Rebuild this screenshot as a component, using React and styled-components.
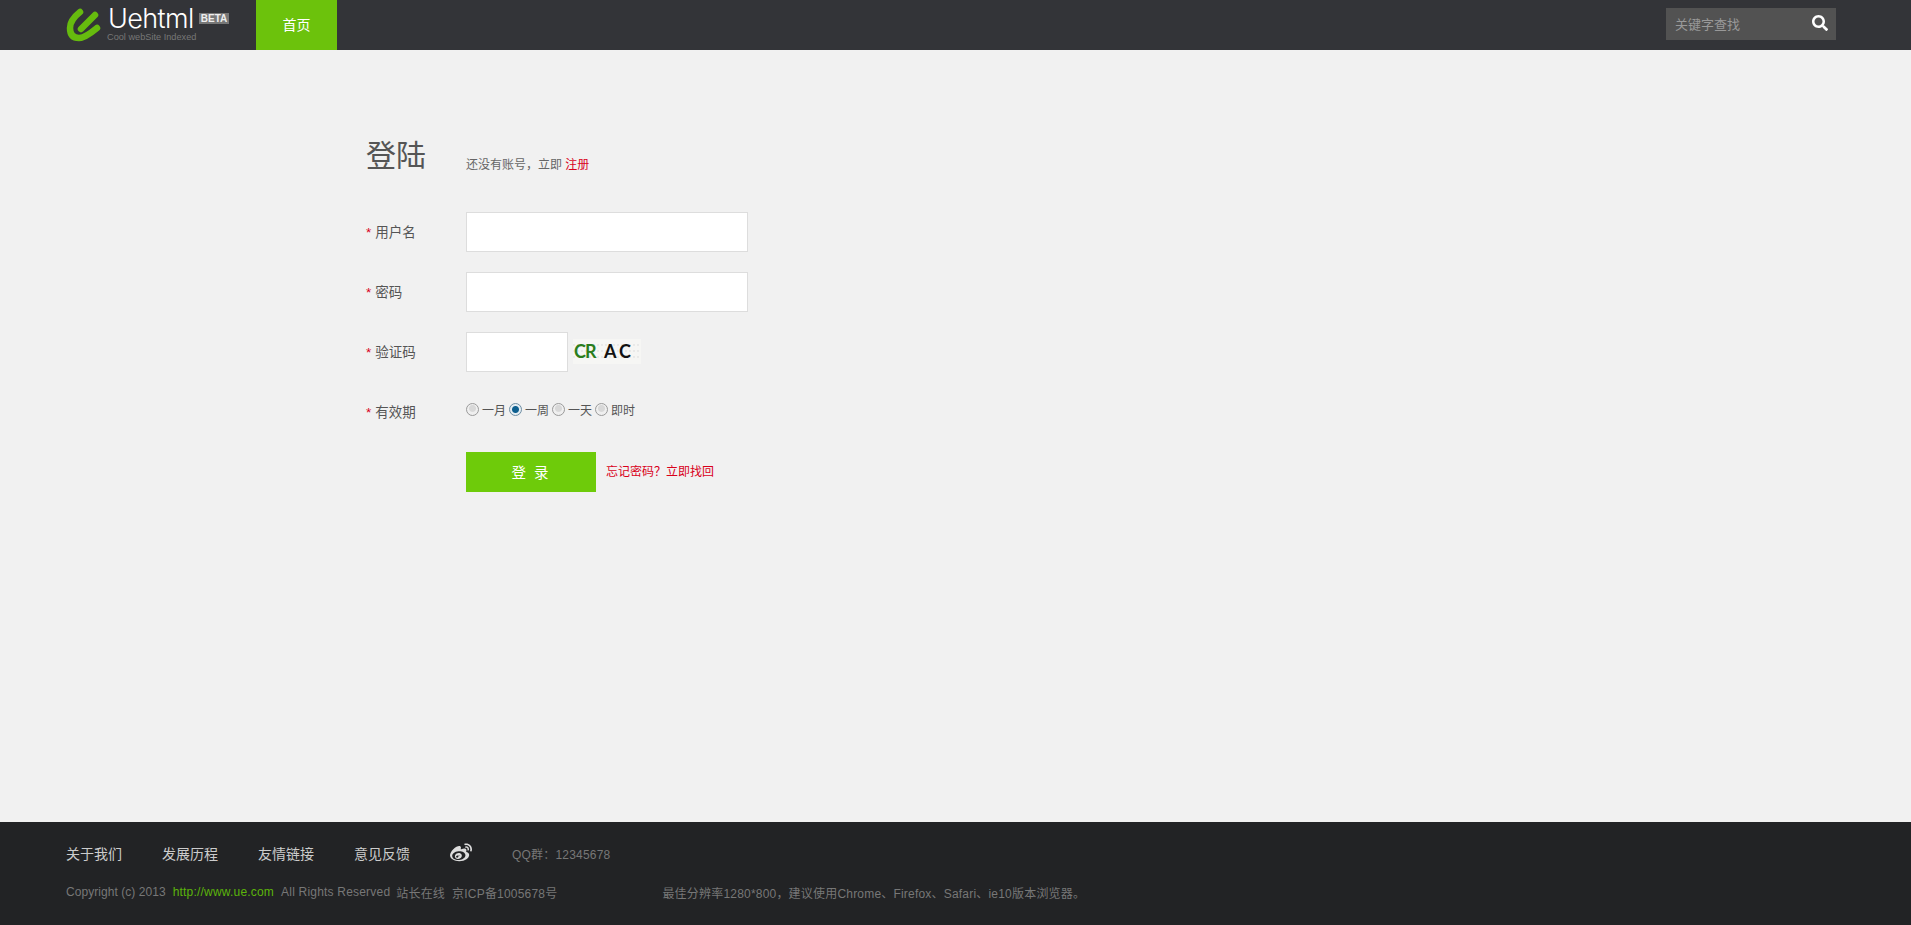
import React from 'react';
import styled, { createGlobalStyle } from 'styled-components';
import { FaSearch, FaWeibo } from 'react-icons/fa';

const FONT = '"Liberation Sans", "Noto Sans CJK SC", sans-serif';

const Global = createGlobalStyle`
  html, body { margin: 0; padding: 0; background: #f1f1f1; }
  body { font-family: ${FONT}; font-size: 12px; color: #555; }
  * { box-sizing: border-box; }
`;

const Page = styled.div`
  display: flex;
  flex-direction: column;
  height: 925px;
  overflow: hidden;
`;

const Header = styled.header`
  display: flex;
  align-items: stretch;
  height: 50px;
  padding: 0 75px 0 66px;
  background: #333438;
  flex: none;
`;
const Logo = styled.a`
  display: flex;
  width: 190px;
  flex: none;
`;
const LogoMark = styled.svg`
  width: 36px;
  height: 36px;
  margin-top: 7px;
  flex: none;
`;
const LogoWords = styled.div`
  display: flex;
  flex-direction: column;
  margin-left: 6px;
`;
const LogoRow = styled.div`
  display: flex;
  align-items: flex-start;
`;
const LogoName = styled.span`
  font-family: "Inter", sans-serif;
  font-weight: 300;
  font-size: 27px;
  line-height: 32px;
  margin-top: 3px;
  letter-spacing: -0.6px;
  color: #fff;
`;
const Beta = styled.span`
  margin: 13px 0 0 5px;
  padding: 0 2px;
  height: 11px;
  line-height: 11px;
  background: #777;
  color: #eee;
  font-size: 10px;
  font-weight: bold;
`;
const Slogan = styled.span`
  font-size: 9.2px;
  line-height: 9px;
  margin: -2px 0 0 -1px;
  color: #777;
  white-space: nowrap;
`;
const NavItem = styled.a`
  display: flex;
  align-items: center;
  justify-content: center;
  width: 81px;
  padding-bottom: 2px;
  background: #6cc20c;
  color: #fff;
  font-size: 14px;
`;
const Search = styled.div`
  display: flex;
  align-items: center;
  justify-content: space-between;
  width: 170px;
  height: 32px;
  margin: 8px 0 0 auto;
  padding: 0 8px 2px 9px;
  background: #525252;
  color: #999;
  font-size: 13px;
  svg { color: #fff; font-size: 16px; }
`;

const Main = styled.main`
  flex: 1;
  padding: 83px 0 0 366px;
`;
const TitleRow = styled.div`
  display: flex;
  align-items: flex-end;
  height: 46px;
  margin-bottom: 1px;
`;
const Title = styled.h1`
  width: 100px;
  margin: 0;
  font-size: 30px;
  line-height: 46px;
  font-weight: 400;
  color: #555;
`;
const SubTitle = styled.p`
  margin: 0 0 5px;
  font-size: 12px;
  line-height: 18px;
  color: #666;
`;
const RedLink = styled.a`
  color: #d9001b;
  font-size: 12px;
`;
const Form = styled.form`
  display: flex;
  flex-direction: column;
  gap: 20px;
  margin-top: 33px;
`;
const Row = styled.div`
  display: flex;
  align-items: center;
  height: 40px;
`;
const Label = styled.label`
  width: 100px;
  flex: none;
  margin-top: -2px;
  font-size: 13.5px;
  color: #555;
  i { color: #d9001b; font-style: normal; margin-right: 4px; }
`;
const Input = styled.input`
  width: ${p => p.$width}px;
  height: 40px;
  border: 1px solid #ddd;
  background: #fff;
  outline: none;
`;
const Captcha = styled.svg`
  width: 68px;
  height: 25px;
  margin: -2px 0 0 5px;
`;
const Radios = styled.div`
  display: flex;
  align-items: center;
  margin-top: -6px;
  font-size: 12px;
  color: #555;
`;
const RadioText = styled.span`
  margin: 0 3px 0 3px;
`;
const Radio = styled.input.attrs({ type: 'radio', readOnly: true })`
  appearance: none;
  width: 13px;
  height: 13px;
  margin: 0;
  border-radius: 50%;
  border: 1px solid #9a9a9a;
  background: radial-gradient(circle at 50% 40%, #d8d8d8 0 3px, #efefef 4px);
  &:checked {
    border-color: #6f8ea3;
    background: radial-gradient(circle at 50% 50%, #0d5f8f 0 3px, #e4edf3 4px);
  }
`;
const ButtonRow = styled(Row)`
  padding-left: 100px;
  gap: 10px;
`;
const Submit = styled.button`
  width: 130px;
  height: 40px;
  padding: 0 0 2px;
  border: 0;
  background: #6ecb0a;
  color: #fff;
  font-family: ${FONT};
  font-size: 14.5px;
  letter-spacing: 2px;
`;
const Forgot = styled(RedLink)`
  margin-top: -4px;
`;

const Footer = styled.footer`
  flex: none;
  height: 103px;
  padding: 21px 0 0 66px;
  background: #222325;
  color: #777;
`;
const FooterTop = styled.div`
  display: flex;
  align-items: center;
  height: 20px;
`;
const FooterLink = styled.a`
  margin-right: 40px;
  color: #ccc;
  font-size: 14px;
`;
const Weibo = styled(FaWeibo)`
  color: #ddd;
  font-size: 22px;
  margin: 0 40px 0 0;
`;
const QQ = styled.span`
  font-size: 12px;
  letter-spacing: 0.2px;
`;
const FooterBottom = styled.div`
  display: flex;
  align-items: center;
  height: 20px;
  margin-top: 19px;
  font-size: 12px;
  letter-spacing: 0.2px;
  color: #777;
`;
const Copy = styled.span`
  letter-spacing: 0.05px;
`;
const Green = styled.a`
  color: #5cb50a;
  margin: 0 7px;
`;
const Note = styled.span`
  margin-left: ${p => p.$gap}px;
`;

const ueLogo = (
  <LogoMark viewBox="0 0 36 36" fill="none" stroke="#66bb0e" strokeWidth="6.5" strokeLinecap="round">
    <path d="M14 5 Q4 13 4 21 Q4 31 13 31 Q19 31 31 21" />
    <path d="M29 8 L15 22" />
  </LogoMark>
);

const links = ['关于我们', '发展历程', '友情链接', '意见反馈'];
const periods = [['一月', false], ['一周', true], ['一天', false], ['即时', false]];

export default function App() {
  return (
    <Page>
      <Global />
      <Header>
        <Logo>
          {ueLogo}
          <LogoWords>
            <LogoRow>
              <LogoName>Uehtml</LogoName>
              <Beta>BETA</Beta>
            </LogoRow>
            <Slogan>Cool webSite Indexed</Slogan>
          </LogoWords>
        </Logo>
        <NavItem>首页</NavItem>
        <Search>
          <span>关键字查找</span>
          <FaSearch />
        </Search>
      </Header>

      <Main>
        <TitleRow>
          <Title>登陆</Title>
          <SubTitle>还没有账号，立即 <RedLink>注册</RedLink></SubTitle>
        </TitleRow>
        <Form>
          <Row>
            <Label><i>*</i>用户名</Label>
            <Input $width={282} />
          </Row>
          <Row>
            <Label><i>*</i>密码</Label>
            <Input $width={282} />
          </Row>
          <Row>
            <Label><i>*</i>验证码</Label>
            <Input $width={102} />
            <Captcha viewBox="0 0 68 25">
              <rect width="68" height="25" fill="#f6f6f4" />
              <path d="M0 6H68M0 12H68M0 18H68" stroke="#ddd" strokeDasharray="2 2" />
              <text x="1" y="19" fontFamily="Lato, sans-serif" fontSize="18" fontWeight="700" fill="#2a7d1c" letterSpacing="-1">CR</text>
              <text x="31" y="19" fontFamily="Lato, sans-serif" fontSize="18" fontWeight="700" fill="#111" letterSpacing="3">AC</text>
            </Captcha>
          </Row>
          <Row>
            <Label><i>*</i>有效期</Label>
            <Radios>
              {periods.map(([text, on]) => (
                <React.Fragment key={text}>
                  <Radio name="period" defaultChecked={on} />
                  <RadioText>{text}</RadioText>
                </React.Fragment>
              ))}
            </Radios>
          </Row>
          <ButtonRow>
            <Submit type="button">登 录</Submit>
            <Forgot>忘记密码？立即找回</Forgot>
          </ButtonRow>
        </Form>
      </Main>

      <Footer>
        <FooterTop>
          {links.map(l => <FooterLink key={l}>{l}</FooterLink>)}
          <Weibo />
          <QQ>QQ群：12345678</QQ>
        </FooterTop>
        <FooterBottom>
          <Copy>Copyright (c) 2013</Copy>
          <Green>http://www.ue.com</Green>
          <span>All Rights Reserved</span>
          <Note $gap={6}>站长在线</Note>
          <Note $gap={7}>京ICP备1005678号</Note>
          <Note $gap={105}>最佳分辨率1280*800，建议使用Chrome、Firefox、Safari、ie10版本浏览器。</Note>
        </FooterBottom>
      </Footer>
    </Page>
  );
}
